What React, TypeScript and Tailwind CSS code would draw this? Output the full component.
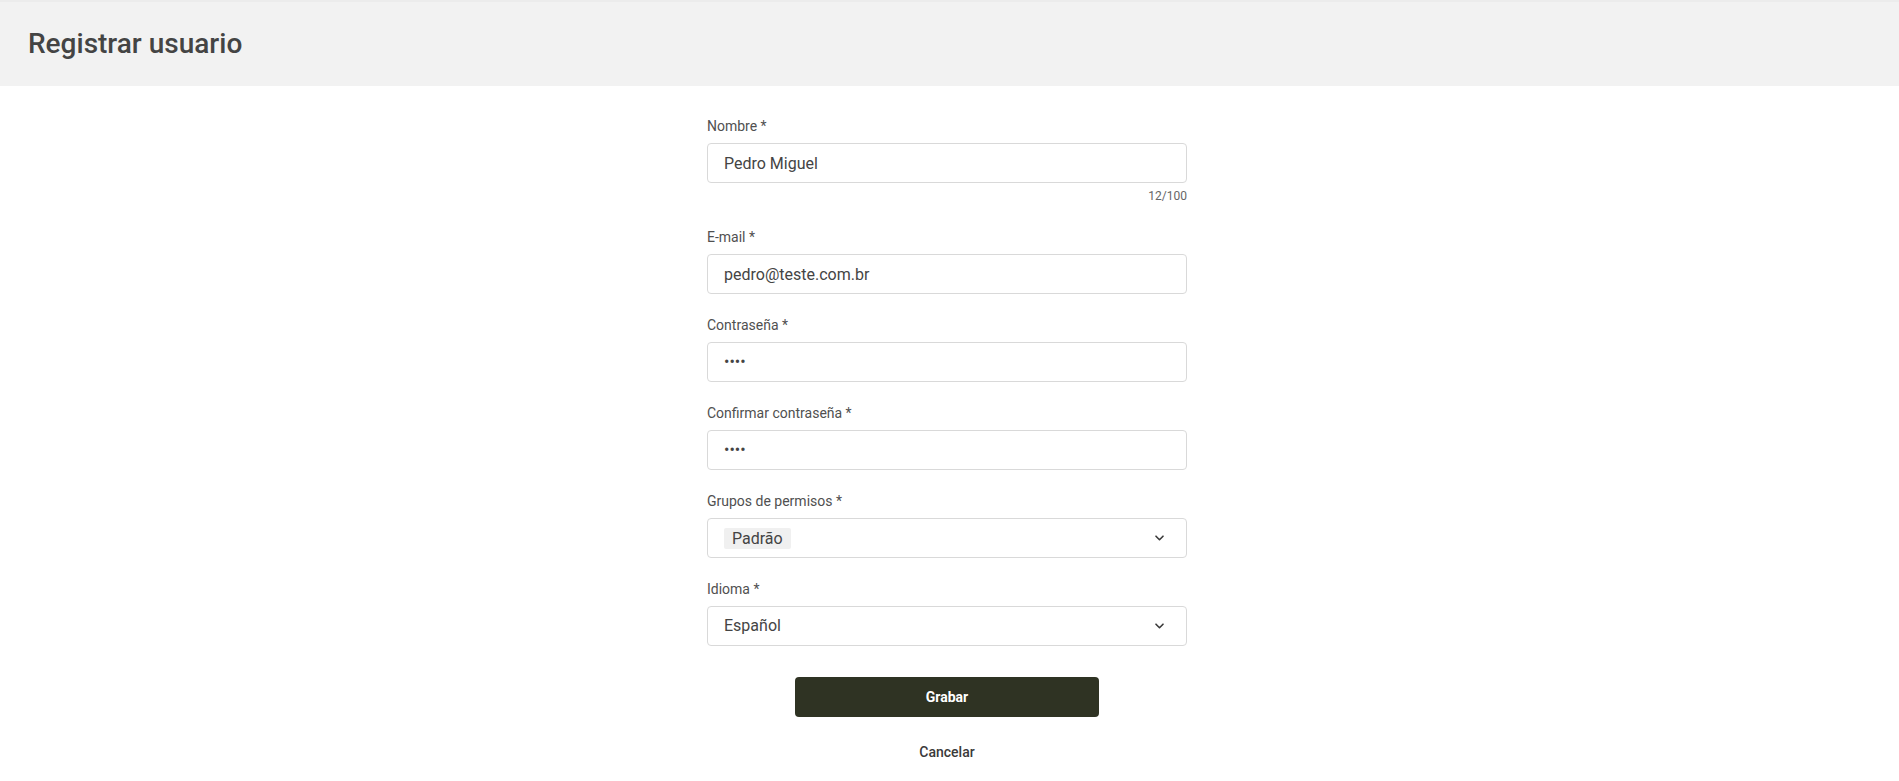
import { ReactNode } from "react";

const FONT = { fontFamily: "Roboto, 'Noto Sans', sans-serif" };

function Field({ label, children }: { label: string; children: ReactNode }) {
  return (
    <div className="mb-[21px]">
      <label className="mb-[7px] block text-sm leading-5 text-[#505050]">
        {label}
      </label>
      {children}
    </div>
  );
}

function TextBox({ value }: { value: string }) {
  return (
    <input
      type="text"
      readOnly
      defaultValue={value}
      style={FONT}
      className="block h-10 w-full rounded-[4px] border border-[#d9d9d9] bg-white px-4 text-base text-[#444] outline-none"
    />
  );
}

function Chevron() {
  return (
    <svg width="9" height="6" viewBox="0 0 9 6" fill="none" className="shrink-0">
      <path d="M1 1.2l3.5 3.5 3.5-3.5" stroke="#3a3a3a" strokeWidth="1.6" strokeLinecap="round" strokeLinejoin="round" />
    </svg>
  );
}

function SelectBox({ children }: { children: ReactNode }) {
  return (
    <div className="flex h-10 w-full items-center justify-between rounded-[4px] border border-[#d9d9d9] bg-white pl-4 pr-[22px] text-base text-[#444]">
      <div className="flex items-center">{children}</div>
      <Chevron />
    </div>
  );
}

export default function App() {
  return (
    <div className="min-h-screen bg-white" style={FONT}>
      <header className="flex h-[86px] items-center border-t-2 border-[#ececec] bg-[#f2f2f2] px-[28px]">
        <h1 className="text-[28px] font-medium text-[#444]">Registrar usuario</h1>
      </header>

      <div className="flex justify-center pr-[5px]">
        <main className="w-[480px] pt-[30px]">
          <div className="mb-[23px]">
            <label className="mb-[7px] block text-sm leading-5 text-[#505050]">
              Nombre *
            </label>
            <TextBox value="Pedro Miguel" />
            <div className="mt-[5px] text-right text-xs leading-4 text-[#666]">12/100</div>
          </div>

          <Field label="E-mail *">
            <TextBox value="pedro@teste.com.br" />
          </Field>

          <Field label="Contraseña *">
            <div className="flex h-10 w-full items-center rounded-[4px] border border-[#d9d9d9] bg-white px-4 text-base text-[#444]">
              ••••
            </div>
          </Field>

          <Field label="Confirmar contraseña *">
            <div className="flex h-10 w-full items-center rounded-[4px] border border-[#d9d9d9] bg-white px-4 text-base text-[#444]">
              ••••
            </div>
          </Field>

          <Field label="Grupos de permisos *">
            <SelectBox>
              <span className="rounded-[2px] bg-[#f0f0f0] px-2 leading-[21px]">Padrão</span>
            </SelectBox>
          </Field>

          <Field label="Idioma *">
            <SelectBox>
              <span>Español</span>
            </SelectBox>
          </Field>

          <div className="flex flex-col items-center pt-[10px]">
            <button
              type="button"
              className="h-10 w-[304px] rounded-[4px] bg-[#2f3323] text-sm font-bold text-white"
            >
              Grabar
            </button>
            <button
              type="button"
              className="mt-[25px] text-sm leading-5 font-medium text-[#3a3a3a]"
            >
              Cancelar
            </button>
          </div>
        </main>
      </div>
    </div>
  );
}
